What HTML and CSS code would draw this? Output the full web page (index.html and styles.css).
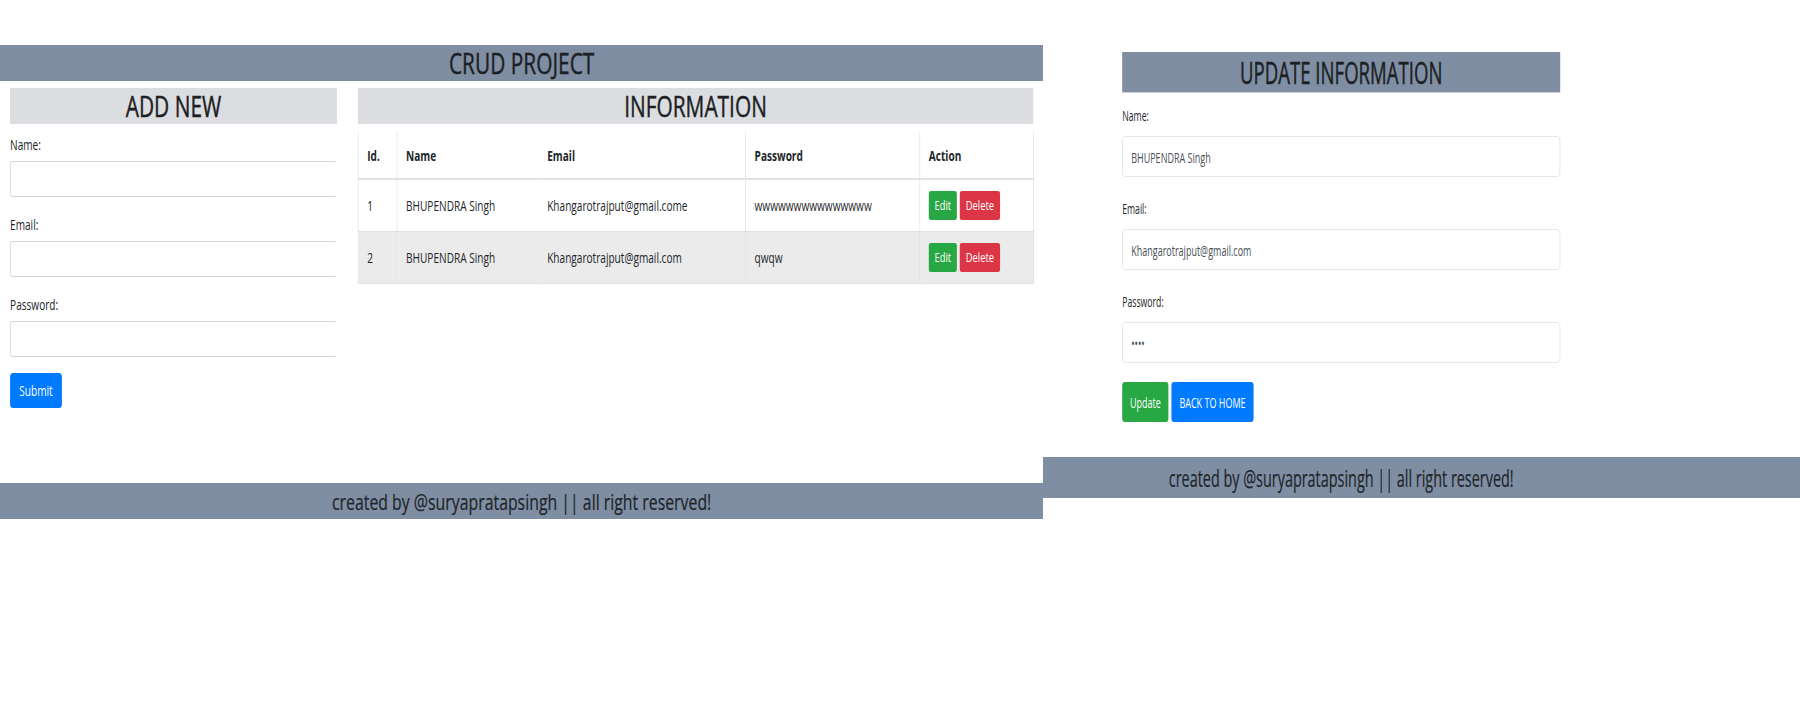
FILE: index.html
```html
<!DOCTYPE html>
<html lang="en">
<head>
<meta charset="utf-8">
<title>CRUD PROJECT</title>
<link rel="stylesheet" href="styles.css">
</head>
<body>
<div class="canvas">
  <div class="shot shot-left">
    <div class="page page-left">
      <header class="bar title-bar"><h1 class="title">CRUD PROJECT</h1></header>
      <main class="cols">
        <section class="add">
          <h2 class="box">ADD NEW</h2>
          <form class="form">
            <div class="group"><label class="lbl">Name:</label><input class="field" type="text"></div>
            <div class="group"><label class="lbl">Email:</label><input class="field" type="text"></div>
            <div class="group group-last"><label class="lbl">Password:</label><input class="field" type="password"></div>
            <button type="button" class="btn btn-blue btn-submit">Submit</button>
          </form>
        </section>
        <section class="info">
          <h2 class="box">INFORMATION</h2>
          <table class="table">
            <colgroup>
              <col class="w-id"><col class="w-name"><col class="w-email"><col class="w-pass"><col class="w-act">
            </colgroup>
            <thead>
              <tr><th>Id.</th><th class="c-name">Name</th><th>Email</th><th>Password</th><th>Action</th></tr>
            </thead>
            <tbody>
              <tr>
                <td>1</td><td class="c-name">BHUPENDRA Singh</td><td>Khangarotrajput@gmail.come</td><td>wwwwwwwwwwwwwww</td>
                <td><div class="acts"><button type="button" class="btn btn-green btn-edit">Edit</button><button type="button" class="btn btn-red btn-del">Delete</button></div></td>
              </tr>
              <tr class="alt">
                <td>2</td><td class="c-name">BHUPENDRA Singh</td><td>Khangarotrajput@gmail.com</td><td>qwqw</td>
                <td><div class="acts"><button type="button" class="btn btn-green btn-edit">Edit</button><button type="button" class="btn btn-red btn-del">Delete</button></div></td>
              </tr>
            </tbody>
          </table>
        </section>
      </main>
      <footer class="bar foot">created by @suryapratapsingh || all right reserved!</footer>
    </div>
  </div>

  <div class="shot shot-right">
    <div class="page page-right">
      <div class="container">
        <h2 class="upd-box">UPDATE INFORMATION</h2>
        <form class="rform">
          <div class="rgroup"><label class="rlbl">Name:</label><input class="rfield" type="text" value="BHUPENDRA Singh"></div>
          <div class="rgroup"><label class="rlbl">Email:</label><input class="rfield" type="text" value="Khangarotrajput@gmail.com"></div>
          <div class="rgroup rgroup-last"><label class="rlbl">Password:</label><input class="rfield" type="password" value="qwqw"></div>
          <div class="btn-row">
            <button type="button" class="btn btn-green rbtn">Update</button>
            <button type="button" class="btn btn-blue rbtn">BACK TO HOME</button>
          </div>
        </form>
      </div>
      <footer class="bar rfoot"><div class="rfoot-inner">created by @suryapratapsingh || all right reserved!</div></footer>
    </div>
  </div>
</div>
</body>
</html>
```

FILE: styles.css
```css
* { box-sizing: border-box; }

html, body {
  margin: 0;
  padding: 0;
  background: #ffffff;
}

body {
  font-family: "Open Sans", "Noto Sans", sans-serif;
  color: #212529;
}

.canvas {
  display: flex;
  width: 1800px;
  height: 720px;
  overflow: hidden;
}

.shot {
  flex: none;
  height: 720px;
  overflow: hidden;
}

.shot-left { width: 1043px; }
.shot-right { width: 757px; }

.page { transform-origin: 0 0; }

.page-left {
  width: 1449px;
  padding-top: 45px;
  transform: scaleX(0.72);
}

.page-right {
  width: 1262px;
  padding-top: 52px;
  transform: scaleX(0.6);
}

.bar { background: #7f8ea3; }

.heading {
  font-weight: 400;
}

/* ---------- left page ---------- */
.title-bar {
  height: 36px;
  text-align: center;
}

.title {
  margin: 0;
  font-size: 29px;
  line-height: 36px;
  font-weight: 400;
  color: #1c1f24;
  -webkit-text-stroke: 0.45px #1c1f24;
}

.cols {
  display: grid;
  grid-template-columns: 454px 938px;
  column-gap: 29px;
  align-items: start;
  padding: 7px 14px 0;
}

.box {
  margin: 0;
  height: 36px;
  background: #dcdde0;
  text-align: center;
  font-size: 29px;
  line-height: 36px;
  font-weight: 400;
  color: #1c1f24;
  -webkit-text-stroke: 0.45px #1c1f24;
}

.form { padding-top: 13px; }

.group { margin-bottom: 20px; }
.group-last { margin-bottom: 16px; }

.lbl {
  display: block;
  font-size: 14px;
  line-height: 16px;
  margin-bottom: 8px;
}

.field {
  display: block;
  width: 100%;
  height: 36px;
  margin: 0;
  border: 1px solid #ced4da;
  border-right-color: transparent;
  border-radius: 4px;
  background: #fff;
  font: inherit;
}

.btn {
  border: 0;
  margin: 0;
  color: #ffffff;
  font-family: inherit;
  cursor: pointer;
  padding: 0;
}

.btn-blue { background: #007bff; }
.btn-green { background: #28a745; }
.btn-red { background: #dc3545; }

.btn-submit {
  width: 72px;
  height: 35px;
  font-size: 14px;
  border-radius: 4px;
}

.table {
  width: 100%;
  margin-top: 8px;
  border-collapse: collapse;
  table-layout: fixed;
  font-size: 14px;
}

.w-id { width: 54px; }
.w-name { width: 196px; }
.w-email { width: 288px; }
.w-pass { width: 242px; }
.w-act { width: 158px; }

.table th,
.table td {
  padding: 0 12px;
  text-align: left;
  vertical-align: middle;
  border-right: 1px solid #dee2e6;
  white-space: nowrap;
}

.table th:first-child,
.table td:first-child { border-left: 1px solid #dee2e6; }

.table .c-name { border-right-color: #ffffff; }
.table .alt .c-name { border-right-color: #ebebeb; }

.table th {
  height: 47px;
  font-weight: 700;
  border-bottom: 2px solid #dee2e6;
}

.table td {
  height: 52px;
  border-bottom: 1px solid #dee2e6;
}

.table .alt td { background: #ebebeb; }

.acts {
  display: flex;
  gap: 4px;
}

.btn-edit,
.btn-del {
  height: 29px;
  font-size: 13px;
  border-radius: 3px;
}

.btn-edit { width: 39px; }
.btn-del { width: 56px; }

.foot {
  margin-top: 75px;
  height: 36px;
  text-align: center;
  font-size: 22px;
  line-height: 36px;
  -webkit-text-stroke: 0.2px #212529;
}

/* ---------- right page ---------- */
.container {
  margin-left: 132px;
  width: 730px;
}

.upd-box {
  margin: 0;
  height: 41px;
  background: #7f8ea3;
  text-align: center;
  font-size: 31px;
  line-height: 41px;
  font-weight: 400;
  color: #1c1f24;
  -webkit-text-stroke: 0.5px #1c1f24;
  border-bottom: 1px solid #c9d0da;
}

.rform { padding-top: 13px; }

.rgroup { margin-bottom: 22px; }
.rgroup-last { margin-bottom: 19px; }

.rlbl {
  display: block;
  font-size: 14.5px;
  line-height: 20px;
  margin-bottom: 10px;
}

.rfield {
  display: block;
  width: 100%;
  height: 41px;
  margin: 0;
  padding: 0 14px;
  border: 1px solid #dde1e6;
  border-radius: 5px;
  background: #fff;
  color: #495057;
  font-family: inherit;
  font-size: 15px;
}

.btn-row {
  display: flex;
  gap: 5px;
}

.rbtn {
  height: 40px;
  padding: 0 13px;
  font-size: 15px;
  border-radius: 4px;
}

.rfoot {
  margin-top: 35px;
  height: 41px;
  font-size: 24px;
  line-height: 41px;
  -webkit-text-stroke: 0.2px #212529;
}

.rfoot-inner {
  margin-left: 132px;
  width: 730px;
  text-align: center;
}
```
